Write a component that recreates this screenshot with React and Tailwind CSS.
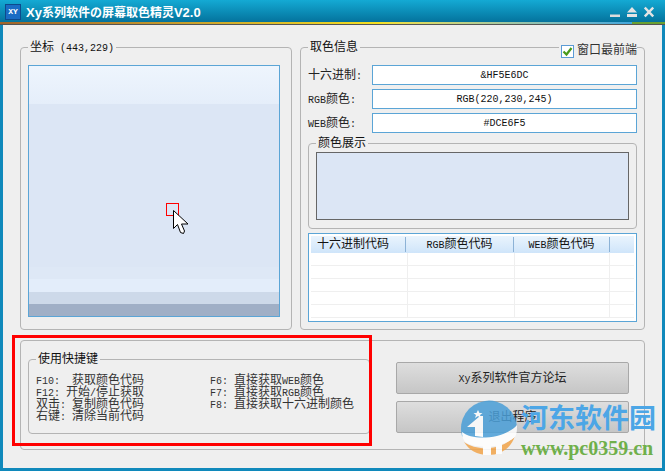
const font = { fontFamily: '"Liberation Mono","Noto Sans CJK SC",monospace' };

// Latin runs are set at 10px (6px advance), CJK at 12px, as in the 12px bitmap font of the reference.
function T({ children }) {
  return (
    <>
      {children.split(/([\x00-\x7f]+)/).filter(Boolean).map((part, i) =>
        /^[\x00-\x7f]/.test(part) ? (
          <span key={i} className="text-[10px] whitespace-pre">{part}</span>
        ) : (
          <span key={i} className="text-[12px] whitespace-pre">{part}</span>
        )
      )}
    </>
  );
}

function Group({ legend, className = "", children }) {
  return (
    <fieldset className={`border border-[#b4b4b4] rounded-[4px] min-w-0 ${className}`}>
      <legend className="h-[14px] leading-[16px] text-[12px] text-[#111] px-[2px]">{legend}</legend>
      {children}
    </fieldset>
  );
}

function Field({ label, value }) {
  return (
    <div className="flex items-center h-[20px]">
      <span className="w-[64px] text-[#222] whitespace-nowrap"><T>{label}</T></span>
      <div className="flex-1 h-full border border-[#5ba5d6] bg-white flex items-center justify-center text-[#111]"><T>{value}</T></div>
    </div>
  );
}

function Line({ children }) {
  return <div className="h-[12px] flex items-center"><span><T>{children}</T></span></div>;
}

const rows = [0, 1, 2, 3, 4];
const btn = "h-[32px] border border-[#a8a8a8] rounded-[2px] bg-gradient-to-b from-[#dedede] to-[#c6c6c6] text-[#222]";

export default function App() {
  return (
    <div style={font} className="w-[665px] h-[471px] flex flex-col bg-[#efefef] overflow-hidden relative">
      <header className="h-[22px] shrink-0 flex items-center bg-gradient-to-b from-[#14aad4] to-[#05739d] pl-[5px] pr-[11px] pt-[2px]">
        <div className="w-[16px] h-[16px] bg-[#1a6cc4] border border-[#0d4a8c] flex items-center justify-center text-white text-[8px] font-bold leading-none">XY</div>
        <div className="ml-[5px] text-white font-bold whitespace-nowrap leading-none" style={{ fontFamily: '"Liberation Sans","Noto Sans CJK SC",sans-serif' }}>
          <span className="text-[13px]">Xy</span><span className="text-[12px]">系列软件の屏幕取色精灵</span><span className="text-[13px]">V2.0</span>
        </div>
        <div className="ml-auto flex items-center gap-[7px]">
          <svg width="10" height="12" viewBox="0 0 10 12"><rect x="0" y="8.500" width="10" height="2.500" fill="#dcdcdc" /></svg>
          <svg width="10" height="12" viewBox="0 0 10 12"><path d="M5 1 10 6.500H0Z M0 8h10v3H0Z" fill="#e4e4e4" /></svg>
          <svg width="10" height="12" viewBox="0 0 10 12"><path d="M.8 1.500 9.200 10.500M9.200 1.500 .8 10.500" stroke="#e4e4e4" strokeWidth="2.400" /></svg>
        </div>
      </header>
      <div className="h-[3px] shrink-0 flex border-b border-[#555]">
        <div className="flex-1 bg-gradient-to-r from-[#a0642a] via-[#f5e020] via-60% to-[#3fa6dc]" />
        <div className="w-[33px] bg-[#6aa032]" />
      </div>
      <main className="flex-1 border-x-[3px] border-b-[3px] border-[#1089bb] flex flex-col px-[17px] pt-[15px]">
        <div className="flex gap-[8px] h-[290px]">
          <Group legend={<T>{"坐标 (443,229)"}</T>} className="w-[272px] pl-[7px] pt-[11px]">
            <div className="w-[252px] h-[252px] border border-[#5ba5d6] flex flex-col relative">
              <div className="h-[38px] bg-gradient-to-b from-[#eef5fd] to-[#e5eefa]" />
              <div className="flex-1 bg-[#dce6f5]" />
              <div className="h-[12px] bg-[#dee8f6]" />
              <div className="h-[13px] bg-[#e3edfa]" />
              <div className="h-[12px] bg-[#cdd9e9]" />
              <div className="h-[12px] bg-[#a0afc6]" />
              <div className="absolute left-[137px] top-[137px] w-[13px] h-[13px] border border-[#ff0000]" />
              <svg className="absolute left-[144px] top-[144px]" width="16" height="25" viewBox="0 0 16 25">
                <path d="M.5.500V18.500L4.500 14.500L7.500 22.500L10.500 23.500L11.500 21L8.500 14H15Z" fill="#fff" stroke="#000" strokeWidth="1" />
              </svg>
            </div>
          </Group>
          <Group legend="取色信息" className="w-[345px] px-[7px] pt-[11px] relative">
            <div className="flex flex-col gap-[4px]">
              <Field label="十六进制:" value="&HF5E6DC" />
              <Field label="RGB颜色:" value="RGB(220,230,245)" />
              <Field label="WEB颜色:" value="#DCE6F5" />
            </div>
            <Group legend="颜色展示" className="mt-[3px] h-[93px] px-[7px] pt-[2px]">
              <div className="h-[68px] bg-[#dce6f5] border border-[#666]" />
            </Group>
            <div className="mt-[4px] h-[89px] border border-[#5ba5d6] bg-white px-[2px] pt-[2px] flex flex-col overflow-hidden">
              <div className="h-[17px] shrink-0 bg-gradient-to-b from-[#eaf4fd] to-[#cfe5fa] flex text-[#111] py-[1px]">
                <div className="w-[95px] pl-[6px] border-r border-[#8cb2d6] leading-[15px]"><T>十六进制代码</T></div>
                <div className="w-[108px] text-center border-r border-[#8cb2d6] leading-[15px]"><T>RGB颜色代码</T></div>
                <div className="w-[96px] text-center border-r border-[#8cb2d6] leading-[15px]"><T>WEB颜色代码</T></div>
              </div>
              {rows.map((r) => (
                <div key={r} className="h-[13px] shrink-0 flex border-b border-[#efefef]">
                  <div className="w-[97px] border-r border-[#efefef]" />
                  <div className="w-[107px] border-r border-[#efefef]" />
                  <div className="w-[95px] border-r border-[#efefef]" />
                </div>
              ))}
            </div>
            <label className="absolute -top-[10px] right-[7px] flex items-center gap-[3px] bg-[#efefef] pl-[2px] text-[12px] text-[#333] leading-[14px]">
              <span className="w-[13px] h-[13px] border border-[#5b9bd5] bg-white flex items-center justify-center">
                <svg width="11" height="11" viewBox="0 0 11 11"><path d="M1.500 5.500 4.500 8.500 9.500 2" fill="none" stroke="#4a9a1a" strokeWidth="2.200" /></svg>
              </span>
              窗口最前端
            </label>
          </Group>
        </div>
        <div className="mt-[10px] h-[110px] border border-[#b4b4b4] rounded-[4px] flex pl-[7px] pr-[15px] pt-[11px]">
          <Group legend="使用快捷键" className="w-[342px] h-[82px] pl-[7px]">
            <div className="flex text-[#333] mt-[8px]">
              <div className="w-[174px] flex flex-col">
                <Line>{"F10:  获取颜色代码"}</Line>
                <Line>{"F12: 开始/停止获取"}</Line>
                <Line>{"双击: 复制颜色代码"}</Line>
                <Line>{"右键: 清除当前代码"}</Line>
              </div>
              <div className="flex flex-col">
                <Line>{"F6: 直接获取WEB颜色"}</Line>
                <Line>{"F7: 直接获取RGB颜色"}</Line>
                <Line>{"F8: 直接获取十六进制颜色"}</Line>
              </div>
            </div>
          </Group>
          <div className="ml-auto flex flex-col gap-[7px] w-[233px] pt-[10px]">
            <button className={btn}><T>Xy系列软件官方论坛</T></button>
            <button className={btn}><T>退出程序</T></button>
          </div>
        </div>
      </main>
      <div className="absolute left-[12px] top-[335px] w-[360px] h-[111px] border-[3px] border-[#ff0000]" />
      <div className="absolute left-[460px] top-[400px] flex items-start">
        <svg width="58" height="56" viewBox="0 0 58 56" className="opacity-85">
          <path d="M2 36A28 28 0 1 1 57 28C46 42 14 46 2 36Z" fill="#4a9fd8" />
          <path d="M4 42C18 52 42 50 55 36C51 48 41 55 28 55C17 55 9 50 4 42Z" fill="#f2a44a" />
          <path d="M5 42C18 50 42 48 55 37C57 33 57 30 57 25C46 38 14 42 2 32C2 36 3 39 5 42Z" fill="#fff" />
          <path d="M7 27 20 16H23V37L15 36V27Z" fill="#fff" />
          <path d="M18 10 19.500 13 22.500 13 20 15 21 18 18 16 15 18 16 15 13.500 13 16.500 13Z" fill="#fff" />
          <rect x="23" y="44" width="8" height="11" fill="#fff" />
          <rect x="36" y="42" width="6" height="12" fill="#fff" />
        </svg>
        <div className="flex flex-col ml-[3px] mt-[1px]">
          <span className="text-[27px] leading-[32px] font-bold text-[#4ca6e6] whitespace-nowrap" style={{ fontFamily: '"Noto Sans CJK SC",sans-serif' }}>河东软件园</span>
          <span className="text-[20px] leading-[18px] mt-[6px] font-bold text-[#6fb04a] whitespace-nowrap" style={{ fontFamily: '"Liberation Serif",serif' }}>www.pc0359.cn</span>
        </div>
      </div>
    </div>
  );
}
